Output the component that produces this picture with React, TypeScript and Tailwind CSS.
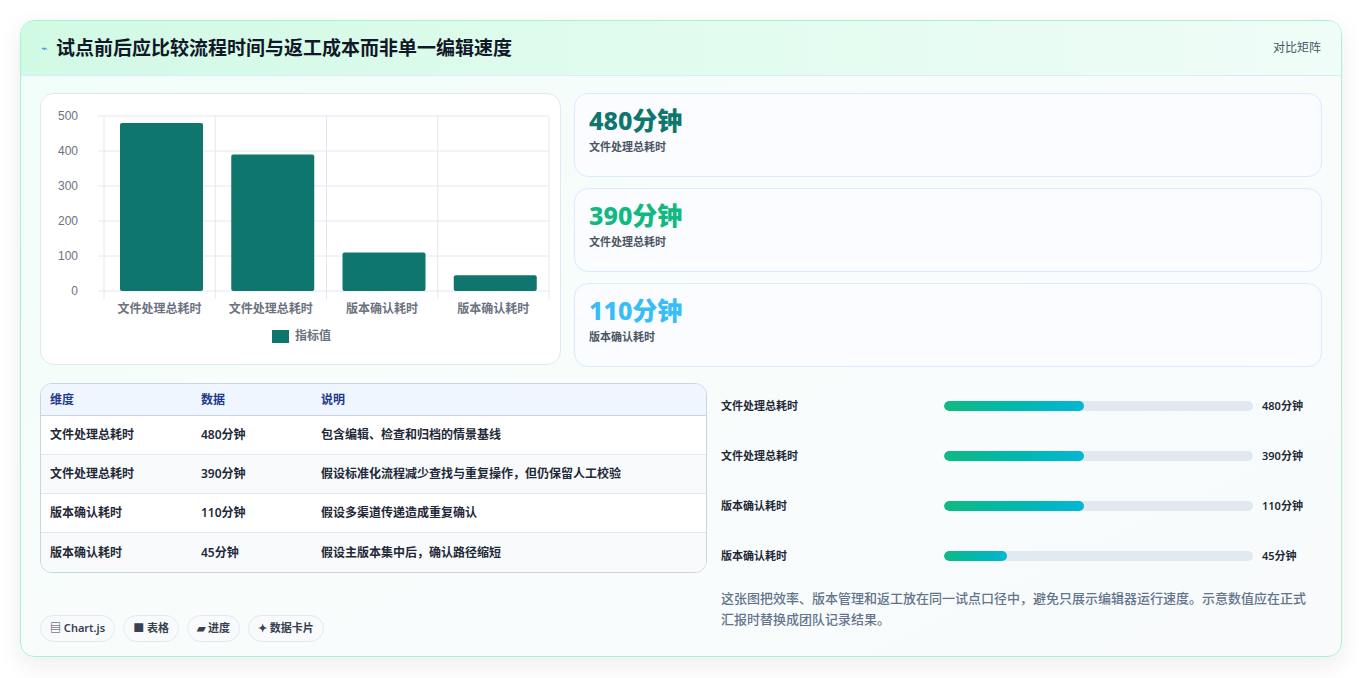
import React from "react";

const font = { fontFamily: '"Noto Sans","Noto Sans CJK SC",sans-serif' };

const bars = [
  { l: "文件处理总耗时", v: 480 },
  { l: "文件处理总耗时", v: 390 },
  { l: "版本确认耗时", v: 110 },
  { l: "版本确认耗时", v: 45 },
];

function Chart() {
  const x0 = 63, x1 = 508, y0 = 22, y1 = 197;
  const cw = (x1 - x0) / 4;
  return (
    <svg width="520" height="271" className="block">
      {[0, 100, 200, 300, 400, 500].map((t) => {
        const y = y1 - (t / 500) * (y1 - y0);
        return (
          <g key={t}>
            <line x1={x0 - 6} x2={x1} y1={y} y2={y} stroke="#e2e8f0" />
            <text x={x0 - 26} y={y + 4} textAnchor="end" fontSize="12" fill="#6b7280" fontFamily="Liberation Sans, sans-serif">{t}</text>
          </g>
        );
      })}
      {[0, 1, 2, 3, 4].map((i) => (
        <line key={i} x1={x0 + i * cw} x2={x0 + i * cw} y1={y0} y2={y1 + 8} stroke="#e2e8f0" />
      ))}
      {bars.map((b, i) => {
        const h = (b.v / 500) * (y1 - y0);
        return (
          <g key={i}>
            <rect x={x0 + i * cw + 1 + 15} y={y1 - h} width={83} height={h} rx="2" fill="#0f766e" />
            <text x={x0 + i * cw + cw / 2} y={y1 + 22} textAnchor="middle" fontSize="12" fontWeight="600" fill="#6b7280" style={font}>{b.l}</text>
          </g>
        );
      })}
      <rect x="231" y="236" width="17" height="13" fill="#0f766e" />
      <text x="254" y="246" fontSize="12" fontWeight="600" fill="#6b7280" style={font}>指标值</text>
    </svg>
  );
}

const stats = [
  { v: "480分钟", l: "文件处理总耗时", c: "text-[#0f766e]" },
  { v: "390分钟", l: "文件处理总耗时", c: "text-[#10b981]" },
  { v: "110分钟", l: "版本确认耗时", c: "text-[#38bdf8]" },
];

const rows = [
  ["文件处理总耗时", "480分钟", "包含编辑、检查和归档的情景基线"],
  ["文件处理总耗时", "390分钟", "假设标准化流程减少查找与重复操作，但仍保留人工校验"],
  ["版本确认耗时", "110分钟", "假设多渠道传递造成重复确认"],
  ["版本确认耗时", "45分钟", "假设主版本集中后，确认路径缩短"],
];

const prog = [
  ["文件处理总耗时", 140, "480分钟"],
  ["文件处理总耗时", 140, "390分钟"],
  ["版本确认耗时", 140, "110分钟"],
  ["版本确认耗时", 63, "45分钟"],
] as const;

export default function App() {
  return (
    <div className="w-[1363px] h-[678px] bg-white p-[20px] pr-[21px]" style={font}>
      <div className="h-[637px] rounded-[14px] border border-[#a7f3d0] bg-gradient-to-br from-[#f0fdf8] via-[#f8fdfc] to-[#f8fafc] shadow-[0_8px_24px_rgba(15,23,42,0.08)] overflow-hidden">
        <div className="h-[55px] flex items-center justify-between px-[20px] bg-gradient-to-r from-[#d1fae5] to-[#f0fdf8] border-b border-[#dbeafe]">
          <div className="flex items-center gap-[8px]">
            <span className="text-[11px] text-[#3b82f6]">⌁</span>
            <span className="text-[19px] font-bold text-[#111827]">试点前后应比较流程时间与返工成本而非单一编辑速度</span>
          </div>
          <span className="text-[12px] text-[#4b5563]">对比矩阵</span>
        </div>
        <div className="px-[19px] pt-[17px]">
          <div className="flex gap-[13px]">
            <div className="w-[521px] h-[272px] rounded-[14px] border border-[#e2e8f0] bg-white">
              <Chart />
            </div>
            <div className="flex-1 flex flex-col gap-[11px]">
              {stats.map((s, i) => (
                <div key={i} className="h-[84px] rounded-[14px] border border-[#dbeafe] bg-[#fafcff] px-[14px] pt-[9px]">
                  <div className={`text-[25px] font-extrabold leading-[34px] ${s.c}`}>{s.v}</div>
                  <div className="text-[11px] font-semibold text-[#4b5563] mt-[2px]">{s.l}</div>
                </div>
              ))}
            </div>
          </div>
          <div className="flex gap-[13px] mt-[16px]">
            <div className="w-[667px]">
              <div className="rounded-[12px] border border-[#cbd5e1] overflow-hidden bg-white">
                <div className="h-[32px] flex items-center bg-[#eff6ff] border-b border-[#cbd5e1] text-[12px] font-semibold text-[#1e3a8a]">
                  <div className="w-[160px] pl-[9px]">维度</div>
                  <div className="w-[120px]">数据</div>
                  <div>说明</div>
                </div>
                {rows.map((r, i) => (
                  <div key={i} className={`h-[39px] flex items-center text-[12px] font-semibold text-[#1f2937] ${i % 2 ? "bg-[#f8fafc]" : "bg-white"} ${i < 3 ? "border-b border-[#e2e8f0]" : ""}`}>
                    <div className="w-[160px] pl-[9px]">{r[0]}</div>
                    <div className="w-[120px]">{r[1]}</div>
                    <div>{r[2]}</div>
                  </div>
                ))}
              </div>
              <div className="flex gap-[8px] mt-[42px]">
                {["▤ Chart.js", "■ 表格", "▰ 进度", "✦ 数据卡片"].map((c) => (
                  <span key={c} className="h-[27px] px-[9px] flex items-center rounded-full border border-[#e2e8f0] bg-[#f8fafc] text-[11px] font-semibold text-[#374151]">{c}</span>
                ))}
              </div>
            </div>
            <div className="flex-1 pl-[1px]">
              <div className="flex flex-col gap-[30px] pt-[13px]">
                {prog.map((p, i) => (
                  <div key={i} className="h-[20px] flex items-center text-[11px] font-semibold text-[#1f2937]">
                    <div className="w-[223px]">{p[0]}</div>
                    <div className="w-[309px] h-[10px] rounded-full bg-[#e2e8f0] overflow-hidden">
                      <div className="h-full rounded-full bg-gradient-to-r from-[#10b981] to-[#06b6d4]" style={{ width: p[1] }} />
                    </div>
                    <div className="pl-[9px]">{p[2]}</div>
                  </div>
                ))}
              </div>
              <p className="mt-[22px] text-[13px] leading-[21px] text-[#64748b] font-medium pr-[4px]">
                这张图把效率、版本管理和返工放在同一试点口径中，避免只展示编辑器运行速度。示意数值应在正式汇报时替换成团队记录结果。
              </p>
            </div>
          </div>
        </div>
      </div>
    </div>
  );
}
